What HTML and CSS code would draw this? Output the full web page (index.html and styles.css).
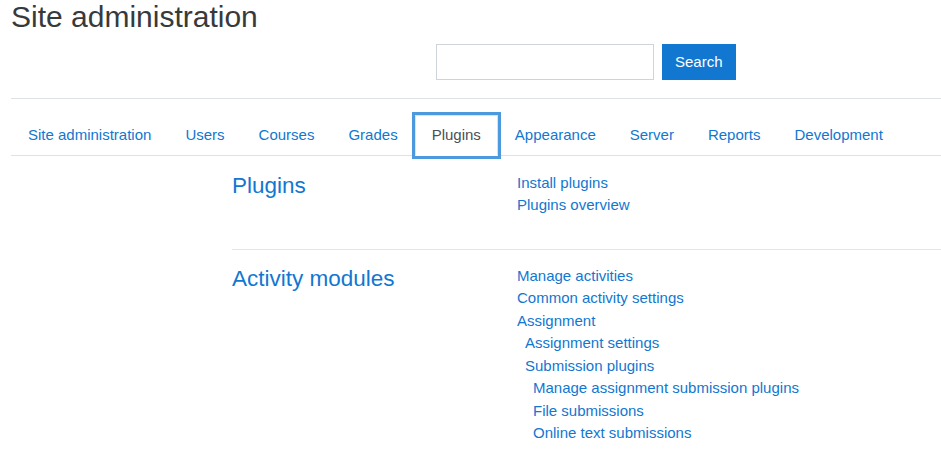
FILE: index.html
```html
<!DOCTYPE html>
<html lang="en">
<head>
<meta charset="utf-8">
<title>Site administration</title>
<link rel="stylesheet" href="styles.css">
</head>
<body>
<div class="page">
  <h1 class="title">Site administration</h1>
  <form class="search">
    <input class="search-input" type="text" aria-label="Search">
    <button class="search-btn" type="button">Search</button>
  </form>
  <hr class="rule">
  <ul class="tabs">
    <li><a class="tab" href="#">Site administration</a></li>
    <li><a class="tab" href="#">Users</a></li>
    <li><a class="tab" href="#">Courses</a></li>
    <li><a class="tab" href="#">Grades</a></li>
    <li><a class="tab active" href="#">Plugins</a></li>
    <li><a class="tab" href="#">Appearance</a></li>
    <li><a class="tab" href="#">Server</a></li>
    <li><a class="tab" href="#">Reports</a></li>
    <li><a class="tab" href="#">Development</a></li>
  </ul>
  <div class="content">
    <section class="cat">
      <h4 class="cat-title"><a href="#">Plugins</a></h4>
      <ul class="links">
        <li><a href="#">Install plugins</a></li>
        <li><a href="#">Plugins overview</a></li>
      </ul>
    </section>
    <hr class="sep">
    <section class="cat">
      <h4 class="cat-title"><a href="#">Activity modules</a></h4>
      <ul class="links">
        <li><a href="#">Manage activities</a></li>
        <li><a href="#">Common activity settings</a></li>
        <li><a href="#">Assignment</a>
          <ul class="links sub">
            <li><a href="#">Assignment settings</a></li>
            <li><a href="#">Submission plugins</a>
              <ul class="links sub">
                <li><a href="#">Manage assignment submission plugins</a></li>
                <li><a href="#">File submissions</a></li>
                <li><a href="#">Online text submissions</a></li>
              </ul>
            </li>
          </ul>
        </li>
      </ul>
    </section>
  </div>
</div>
</body>
</html>
```
FILE: styles.css
```css
html, body {
  margin: 0;
  padding: 0;
  background: #fff;
}
body {
  font-family: "Liberation Sans", Arial, sans-serif;
  font-size: 15px;
  line-height: 1.5;
  color: #373a3c;
  overflow: hidden;
}
a {
  color: #1177d1;
  text-decoration: none;
}
.page {
  padding-left: 11px;
}
.title {
  margin: 0 0 12px;
  padding-top: 2px;
  font-size: 30px;
  line-height: 30px;
  font-weight: 400;
  color: #373a3c;
}
.search {
  display: flex;
  gap: 8px;
  margin: 0 0 0 425px;
  height: 36px;
}
.search-input {
  box-sizing: border-box;
  width: 218px;
  height: 36px;
  margin: 0;
  border: 1px solid #ced4da;
  border-radius: 0;
  padding: 6px 12px;
  font: inherit;
}
.search-btn {
  box-sizing: border-box;
  height: 36px;
  margin: 0;
  padding: 0 12px;
  border: 1px solid #1177d1;
  border-radius: 0;
  background: #1177d1;
  color: #fff;
  font: inherit;
}
.rule {
  margin: 18px 0 0;
  border: 0;
  border-top: 1px solid #dee2e6;
  height: 0;
}
.tabs {
  display: flex;
  list-style: none;
  margin: 16px 0 0;
  padding: 0;
  border-bottom: 1px solid #dee2e6;
}
.tabs li {
  margin-bottom: -1px;
}
.tab {
  display: block;
  padding: 8px 16px;
  border: 1px solid transparent;
  line-height: 22.5px;
  color: #1177d1;
}
.tab.active {
  position: relative;
  z-index: 1;
  color: #495057;
  background: #fff;
  border-color: #dee2e6 #dee2e6 #fff;
  box-shadow: 0 0 0 3px #4d99dd;
}
.content {
  margin-top: 16px;
  padding-left: 221px;
}
.cat {
  display: grid;
  grid-template-columns: 285px 1fr;
}
.cat-title {
  margin: 0;
  font-size: 22.5px;
  line-height: 1.2;
  font-weight: 400;
}
.links {
  list-style: none;
  margin: 0 0 16px;
  padding: 0;
}
.links li {
  line-height: 22.5px;
}
.links.sub {
  margin: 0;
  padding-left: 8px;
}
.sep {
  margin: 16px 0 15px;
  border: 0;
  border-top: 1px solid rgba(0, 0, 0, 0.1);
  height: 0;
}
```
